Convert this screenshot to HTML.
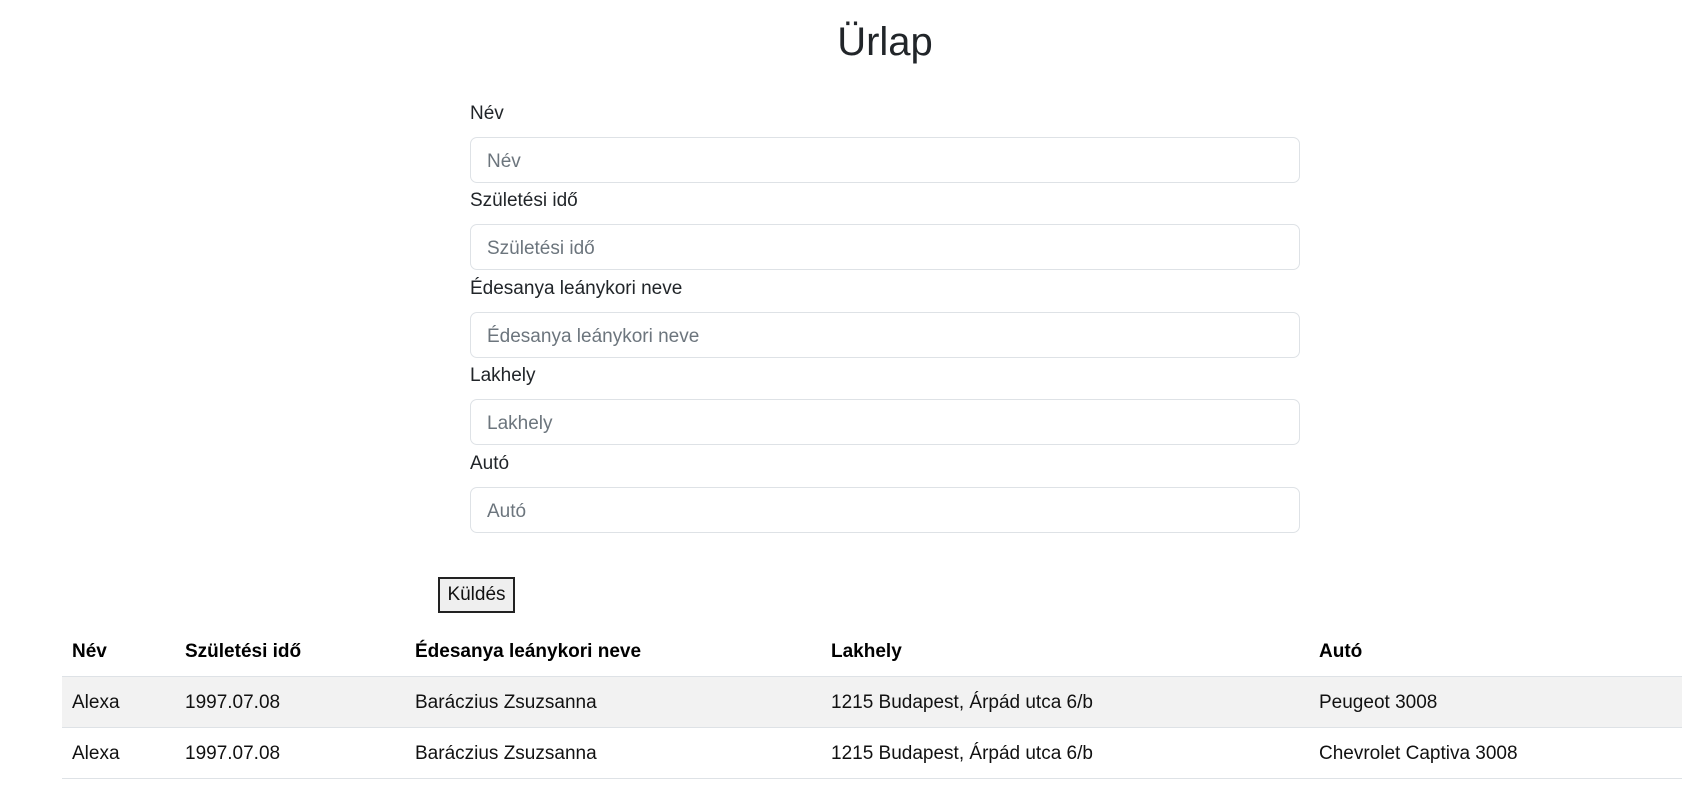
<!DOCTYPE html>
<html><head><meta charset="utf-8"><style>
body{margin:0;width:1708px;height:802px;background:#fff;font-family:"Liberation Sans",sans-serif;color:#212529;position:relative;overflow:hidden}
.a{position:absolute;white-space:nowrap}
h1{position:absolute;margin:0;left:0;width:1770px;text-align:center;top:18px;font-size:40px;font-weight:400;line-height:48px}
.lbl{font-size:19px;line-height:24px;left:470px}
.inp{left:470px;height:44px;border:1px solid #dee2e6;border-radius:7px;box-sizing:content-box;font-size:19px;color:#6c757d;line-height:47px;padding-left:16px;width:812px}
.btn{left:438px;top:577px;width:73px;height:32px;border:2px solid #222;background:#efefef;font-size:19px;line-height:32px;text-align:center;color:#111}
.th{font-weight:bold;font-size:19px;color:#000;top:641px}
.row{left:62px;width:1620px;height:50px;border-bottom:1px solid #dee2e6}
.td{font-size:19px;color:#111}
</style></head><body>
<h1>Ürlap</h1>
<div class="a lbl" style="top:102px">Név</div>
<div class="a inp" style="top:137px">Név</div>
<div class="a lbl" style="top:189px">Születési idő</div>
<div class="a inp" style="top:224px">Születési idő</div>
<div class="a lbl" style="top:277px">Édesanya leánykori neve</div>
<div class="a inp" style="top:312px">Édesanya leánykori neve</div>
<div class="a lbl" style="top:364px">Lakhely</div>
<div class="a inp" style="top:399px">Lakhely</div>
<div class="a lbl" style="top:452px">Autó</div>
<div class="a inp" style="top:487px">Autó</div>
<div class="a btn">Küldés</div>
<div class="a row" style="top:626px;height:50px"></div>
<div class="a row" style="top:677px;background:#f2f2f2"></div>
<div class="a row" style="top:728px"></div>
<div class="a th" style="left:72px">Név</div>
<div class="a th" style="left:185px">Születési idő</div>
<div class="a th" style="left:415px">Édesanya leánykori neve</div>
<div class="a th" style="left:831px">Lakhely</div>
<div class="a th" style="left:1319px">Autó</div>
<div class="a td" style="left:72px;top:692px">Alexa</div>
<div class="a td" style="left:185px;top:692px">1997.07.08</div>
<div class="a td" style="left:415px;top:692px">Baráczius Zsuzsanna</div>
<div class="a td" style="left:831px;top:692px">1215 Budapest, Árpád utca 6/b</div>
<div class="a td" style="left:1319px;top:692px">Peugeot 3008</div>
<div class="a td" style="left:72px;top:743px">Alexa</div>
<div class="a td" style="left:185px;top:743px">1997.07.08</div>
<div class="a td" style="left:415px;top:743px">Baráczius Zsuzsanna</div>
<div class="a td" style="left:831px;top:743px">1215 Budapest, Árpád utca 6/b</div>
<div class="a td" style="left:1319px;top:743px">Chevrolet Captiva 3008</div>
</body></html>
